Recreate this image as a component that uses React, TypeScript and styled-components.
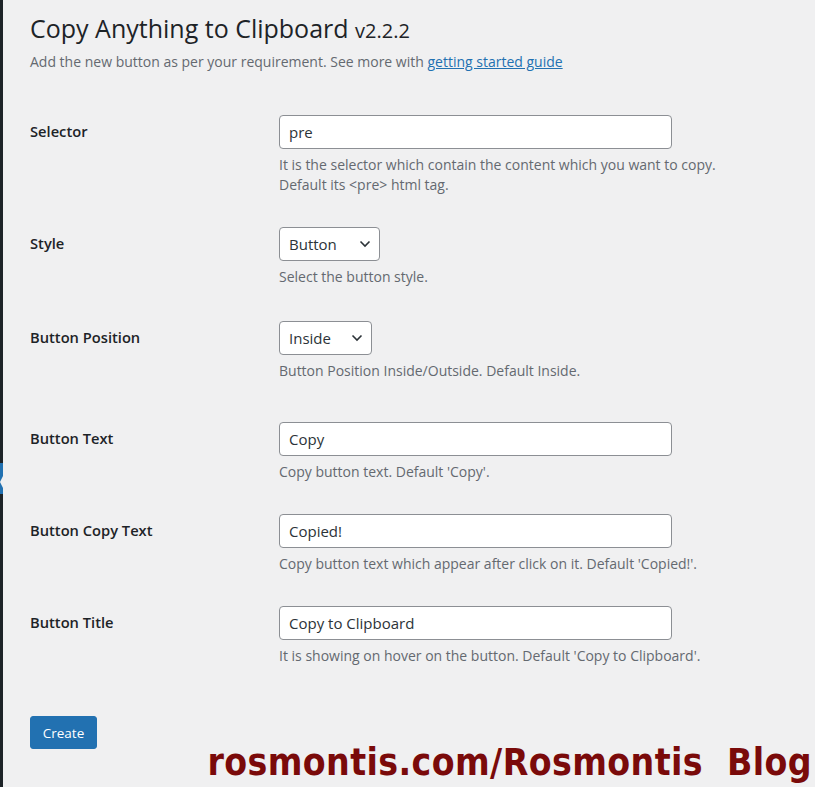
import styled, { createGlobalStyle } from 'styled-components'

const GlobalStyle = createGlobalStyle`
    html, body {
        margin: 0;
        padding: 0;
        background: #f0f0f1;
    }
    body {
        font-family: "Open Sans", "Noto Sans", sans-serif;
        color: #1d2327;
    }
`

type Field = {
    label: string
    kind: 'text' | 'select'
    value: string
    width?: number
    help: string[]
    pad?: number
}

const fields: Field[] = [
    {
        label: 'Selector',
        kind: 'text',
        value: 'pre',
        help: ['It is the selector which contain the content which you want to copy.', 'Default its <pre> html tag.'],
        pad: 17,
    },
    { label: 'Style', kind: 'select', value: 'Button', width: 101, help: ['Select the button style.'], pad: 19 },
    { label: 'Button Position', kind: 'select', value: 'Inside', width: 93, help: ['Button Position Inside/Outside. Default Inside.'], pad: 26 },
    { label: 'Button Text', kind: 'text', value: 'Copy', help: ["Copy button text. Default 'Copy'."], pad: 17 },
    { label: 'Button Copy Text', kind: 'text', value: 'Copied!', help: ["Copy button text which appear after click on it. Default 'Copied!'."], pad: 17 },
    { label: 'Button Title', kind: 'text', value: 'Copy to Clipboard', help: ["It is showing on hover on the button. Default 'Copy to Clipboard'."], pad: 17 },
]

export default function App() {
    return (
        <Page>
            <GlobalStyle />
            <AdminMenu>
                <MenuCurrent />
            </AdminMenu>
            <Wrap>
                <Title>
                    Copy Anything to Clipboard <Version>v2.2.2</Version>
                </Title>
                <Intro>
                    Add the new button as per your requirement. See more with <Link href="#">getting started guide</Link>
                </Intro>
                <Form>
                    {fields.map((f) => (
                        <Row key={f.label} $pad={f.pad}>
                            <Label>{f.label}</Label>
                            <Cell>
                                {f.kind === 'text' ? (
                                    <TextInput>{f.value}</TextInput>
                                ) : (
                                    <Select $width={f.width}>
                                        {f.value}
                                        <Chevron viewBox="0 0 12 8">
                                            <path d="M1.5 1.5 L6 6 L10.5 1.5" />
                                        </Chevron>
                                    </Select>
                                )}
                                <Help>
                                    {f.help.map((line) => (
                                        <div key={line}>{line}</div>
                                    ))}
                                </Help>
                            </Cell>
                        </Row>
                    ))}
                </Form>
                <Submit>Create</Submit>
            </Wrap>
            <Watermark>rosmontis.com/Rosmontis&nbsp; Blog</Watermark>
        </Page>
    )
}

const Page = styled.div`
    position: relative;
    display: flex;
    width: 815px;
    height: 787px;
    overflow: hidden;
    background: #f0f0f1;
`

const AdminMenu = styled.div`
    flex: 0 0 3px;
    background: #1d2327;
    padding-top: 463px;
`

const MenuCurrent = styled.div`
    position: relative;
    height: 31px;
    background: #2271b1;

    &::after {
        content: "";
        position: absolute;
        right: 0;
        top: 13px;
        border-style: solid;
        border-width: 6px 3px 6px 0;
        border-color: transparent #f0f0f1 transparent transparent;
    }
`

const Wrap = styled.div`
    flex: 1;
    padding: 10px 0 0 27px;
`

const Title = styled.h1`
    margin: 0;
    font-size: 25px;
    font-weight: 400;
    line-height: 36px;
    color: #1d2327;
`

const Version = styled.span`
    font-size: 20px;
`

const Intro = styled.p`
    margin: 3px 0 0;
    font-size: 14px;
    line-height: 20px;
    color: #646970;
`

const Link = styled.a`
    color: #2271b1;
    text-decoration: underline;
`

const Form = styled.div`
    display: flex;
    flex-direction: column;
    margin-top: 28px;
`

const Row = styled.div<{ $pad?: number }>`
    display: grid;
    grid-template-columns: 249px 1fr;
    padding: 15px 0 ${({ $pad }) => $pad ?? 17}px;
`

const Label = styled.div`
    padding-top: 7px;
    font-size: 14.7px;
    font-weight: 600;
    line-height: 18px;
    color: #1d2327;
`

const Cell = styled.div`
    display: flex;
    flex-direction: column;
    align-items: flex-start;
`

const TextInput = styled.div`
    box-sizing: border-box;
    width: 393px;
    height: 34px;
    padding: 0 9px;
    display: flex;
    align-items: center;
    background: #fff;
    border: 1px solid #8c8f94;
    border-radius: 4px;
    font-size: 15px;
    color: #2c3338;
`

const Select = styled.div<{ $width?: number }>`
    box-sizing: border-box;
    width: ${({ $width }) => $width ?? 100}px;
    height: 34px;
    padding: 0 8px 0 9px;
    display: flex;
    align-items: center;
    justify-content: space-between;
    background: #fff;
    border: 1px solid #8c8f94;
    border-radius: 4px;
    font-size: 15px;
    color: #2c3338;
`

const Chevron = styled.svg`
    width: 12px;
    height: 8px;
    fill: none;
    stroke: #2c3338;
    stroke-width: 1.6;
`

const Help = styled.div`
    margin-top: 6px;
    font-size: 14px;
    line-height: 20px;
    color: #646970;
`

const Submit = styled.button`
    margin-top: 33px;
    width: 67px;
    height: 33px;
    padding: 0;
    background: #2271b1;
    border: 1px solid #2271b1;
    border-radius: 3px;
    color: #fff;
    font-family: "Open Sans", "Noto Sans", sans-serif;
    font-size: 13.5px;
`

const Watermark = styled.div`
    position: absolute;
    right: 3px;
    bottom: 2px;
    font-family: "DejaVu Sans Condensed", "DejaVu Sans", sans-serif;
    font-weight: 700;
    font-size: 37px;
    letter-spacing: 0.4px;
    line-height: 44px;
    color: #7a0a0a;
    white-space: nowrap;
`
